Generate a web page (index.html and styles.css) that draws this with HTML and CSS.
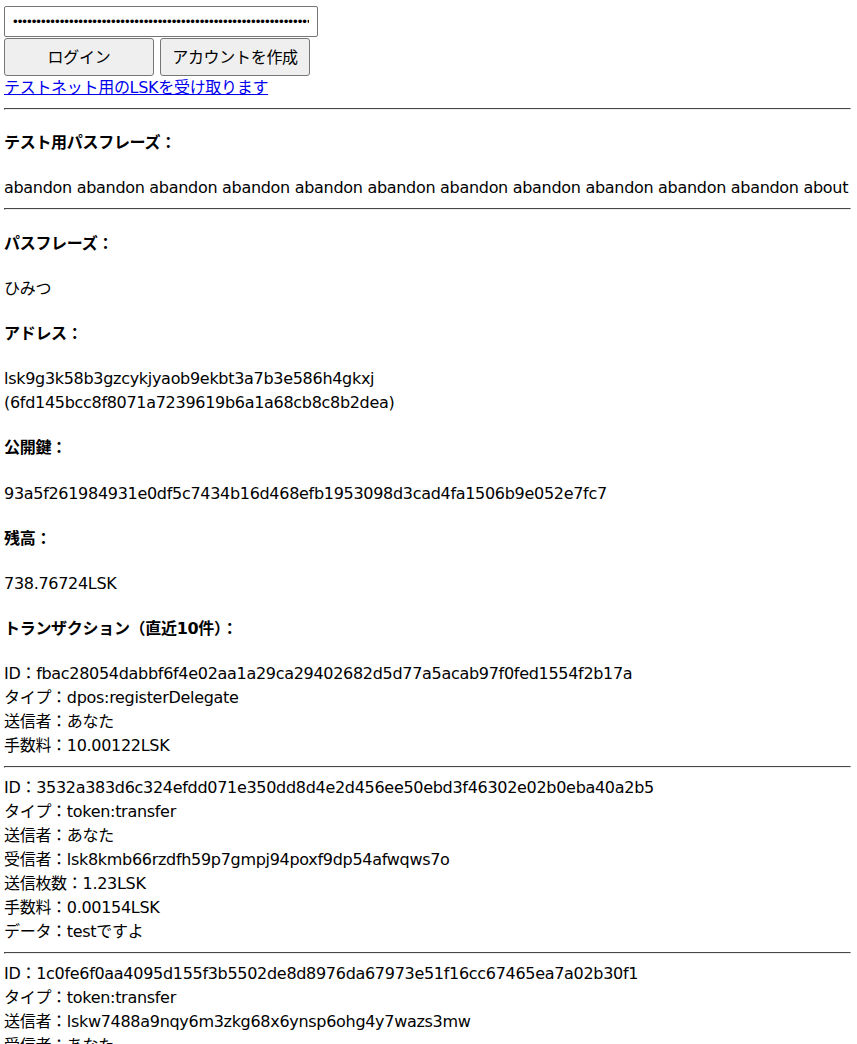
FILE: index.html
```html
<!DOCTYPE html>
<html lang="ja">
<head>
  <meta charset="UTF-8">
  <title>Lisk Wallet</title>
  <link rel="stylesheet" href="styles.css">
</head>
<body>
  <div class="login">
    <input class="pass-input" type="password" value="abandon abandon abandon abandon abandon abandon abandon abandon abandon abandon abandon about">
    <div class="actions">
      <button class="btn">ログイン</button>
      <button class="btn">アカウントを作成</button>
    </div>
    <a class="faucet" href="#">テストネット用のLSKを受け取ります</a>
  </div>
  <hr>

  <h4>テスト用パスフレーズ：</h4>
  <div>abandon abandon abandon abandon abandon abandon abandon abandon abandon abandon abandon about</div>
  <hr>

  <h4>パスフレーズ：</h4>
  <div>ひみつ</div>

  <h4>アドレス：</h4>
  <div>lsk9g3k58b3gzcykjyaob9ekbt3a7b3e586h4gkxj</div>
  <div>(6fd145bcc8f8071a7239619b6a1a68cb8c8b2dea)</div>

  <h4>公開鍵：</h4>
  <div>93a5f261984931e0df5c7434b16d468efb1953098d3cad4fa1506b9e052e7fc7</div>

  <h4>残高：</h4>
  <div>738.76724LSK</div>

  <h4>トランザクション（直近10件）：</h4>
  <div class="tx">
    <div>ID：fbac28054dabbf6f4e02aa1a29ca29402682d5d77a5acab97f0fed1554f2b17a</div>
    <div>タイプ：dpos:registerDelegate</div>
    <div>送信者：あなた</div>
    <div>手数料：10.00122LSK</div>
  </div>
  <hr>
  <div class="tx">
    <div>ID：3532a383d6c324efdd071e350dd8d4e2d456ee50ebd3f46302e02b0eba40a2b5</div>
    <div>タイプ：token:transfer</div>
    <div>送信者：あなた</div>
    <div>受信者：lsk8kmb66rzdfh59p7gmpj94poxf9dp54afwqws7o</div>
    <div>送信枚数：1.23LSK</div>
    <div>手数料：0.00154LSK</div>
    <div>データ：testですよ</div>
  </div>
  <hr>
  <div class="tx">
    <div>ID：1c0fe6f0aa4095d155f3b5502de8d8976da67973e51f16cc67465ea7a02b30f1</div>
    <div>タイプ：token:transfer</div>
    <div>送信者：lskw7488a9nqy6m3zkg68x6ynsp6ohg4y7wazs3mw</div>
    <div>受信者：あなた</div>
    <div>送信枚数：100LSK</div>
    <div>手数料：0.00142LSK</div>
  </div>
  <hr>
</body>
</html>
```

FILE: styles.css
```css
body {
  margin: 6px 6px 8px 4px;
  font-family: "DejaVu Sans", "Noto Sans CJK JP", sans-serif;
  font-size: 16px;
  line-height: 24px;
  letter-spacing: -0.3px;
  color: #000;
  background: #fff;
}

.login {
  display: flex;
  flex-direction: column;
  align-items: flex-start;
}

.pass-input {
  box-sizing: border-box;
  width: 314px;
  height: 31px;
  padding: 1px 8px;
  border: 1px solid #767676;
  border-radius: 2px;
  font-family: "Liberation Sans", sans-serif;
  font-size: 13.33px;
  letter-spacing: 0;
}

.actions {
  display: flex;
  gap: 6px;
  margin-top: 1px;
}

.btn {
  box-sizing: border-box;
  width: 150px;
  height: 38px;
  padding: 0 0 2px;
  background: #efefef;
  border: 1px solid #767676;
  border-radius: 3px;
  color: #000;
  font-family: "DejaVu Sans", "Noto Sans CJK JP", sans-serif;
  font-size: 16px;
  letter-spacing: -0.3px;
}

.faucet {
  color: #0000ee;
}

hr {
  margin: 8px 0;
  border: 1px inset #eee;
  border-top-color: #9a9a9a;
  border-left-color: #9a9a9a;
}

h4 {
  margin: 21.2px 0;
  font-size: 16px;
  font-weight: bold;
}
```
